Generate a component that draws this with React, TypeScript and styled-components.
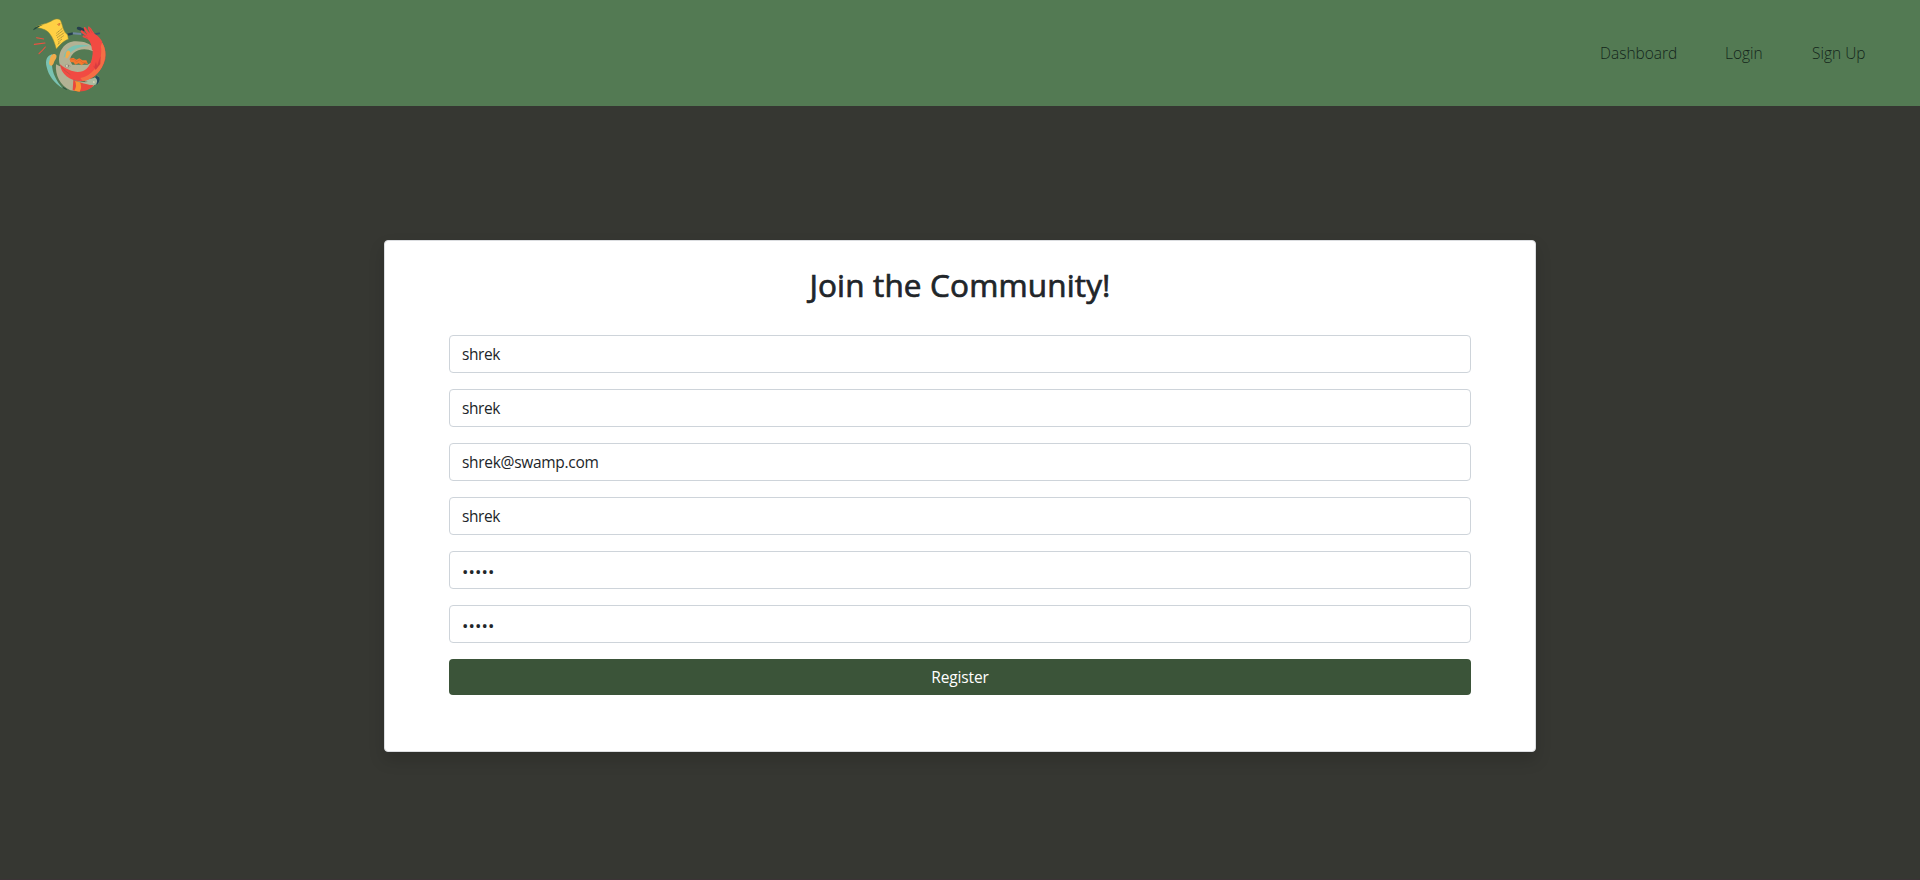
import React from "react";
import styled, { createGlobalStyle } from "styled-components";

const GlobalStyle = createGlobalStyle`
  *, *::before, *::after { box-sizing: border-box; }
  body {
    margin: 0;
    background: #363732;
    color: #212529;
    font-family: "Segoe UI", "Open Sans", "Noto Sans", sans-serif;
    font-size: 16px;
    line-height: 24px;
  }
`;

const Page = styled.div`
  height: 880px;
  display: flex;
  flex-direction: column;
  overflow: hidden;
  border-bottom: 1px solid #3b3336;
`;

const Navbar = styled.header`
  flex: none;
  height: 106px;
  padding: 0 52px 0 30px;
  display: flex;
  align-items: center;
  justify-content: space-between;
  background: #537a53;
`;

const Logo = styled.svg`
  width: 80px;
  height: 80px;
`;

const Nav = styled.nav`
  display: flex;
  gap: 48px;
`;

const NavLink = styled.a<{ $width: number }>`
  width: ${(p) => p.$width}px;
  font-size: 15.5px;
  font-weight: 300;
  white-space: nowrap;
  color: #14261b;
  text-decoration: none;
`;

const Main = styled.main`
  display: flex;
  justify-content: center;
  padding-top: 134px;
`;

const Card = styled.section`
  width: 1152px;
  height: 512px;
  padding: 23px 64px 0;
  background: #fff;
  border: 1px solid #dbdde0;
  border-radius: 4px;
  box-shadow: 0 8px 16px rgba(0, 0, 0, 0.15);
`;

const Title = styled.h1`
  margin: 0 0 29px;
  text-align: center;
  font-size: 31.5px;
  line-height: 42px;
  font-weight: 400;
  letter-spacing: 0.15px;
  -webkit-text-stroke: 0.7px #212529;
`;

const Form = styled.form`
  display: flex;
  flex-direction: column;
  gap: 16px;
`;

const Field = styled.input`
  width: 100%;
  height: 38px;
  padding: 6px 12px;
  border: 1px solid #ced4da;
  border-radius: 4px;
  background: #fff;
  color: #212529;
  font-family: inherit;
  font-size: 15.5px;
  line-height: 24px;
  letter-spacing: -0.4px;
  outline: none;

  &[type="email"] {
    letter-spacing: -0.3px;
  }

  &[type="password"] {
    padding: 7px 12px 5px;
    font-size: 17px;
    letter-spacing: 0.1px;
  }
`;

const SubmitButton = styled.button`
  height: 36px;
  border: 0;
  border-radius: 4px;
  background: #3b5439;
  color: #fff;
  font-family: inherit;
  font-size: 15.5px;
  line-height: 24px;
  letter-spacing: -0.15px;
`;

const LINKS = [
  { label: "Dashboard", width: 77 },
  { label: "Login", width: 39 },
  { label: "Sign Up", width: 56 },
];

const FIELDS = [
  { name: "firstName", type: "text", value: "shrek" },
  { name: "lastName", type: "text", value: "shrek" },
  { name: "email", type: "email", value: "shrek@swamp.com" },
  { name: "username", type: "text", value: "shrek" },
  { name: "password", type: "password", value: "shrek" },
  { name: "confirm", type: "password", value: "shrek" },
];

function HandsLogo() {
  return (
    <Logo viewBox="30 9 240 240" fill="none" aria-hidden="true">
      <path d="M96 133 C80 137 75 153 80 171 C85 196 103 220 128 235 C108 211 97 188 96 165 Z" fill="#79c2b2" />
      <path d="M90 145 C92 132 104 128 109 136 C112 144 103 151 101 160 C97 171 88 168 87 159 Z" fill="#f0ac4c" />
      <path d="M108 163 C105 196 120 226 151 241 C175 247 202 241 222 227 L218 214 C192 222 150 211 124 171 Z" fill="#b3b294" />
      <path d="M160 210 C180 219 204 224 222 226 C209 242 181 250 158 240 Z" fill="#e9483c" />
      <path d="M165 212 L180 217 Q187 230 179 245 L163 242 Q172 228 165 212Z" fill="#f79433" />
      <path d="M196 204 C210 209 225 204 232 197 C241 201 241 213 234 221 L221 226 C207 225 196 218 193 210 Z" fill="#aaba9f" />
      <path d="M229 197 C242 199 242 211 234 221 L227 225 C233 216 233 206 225 203Z" fill="#254b5b" />
      <path d="M219 213 l7 3 -6 4z" fill="#ded9bd" />
      <path fillRule="evenodd" d="M119 163 C111 126 133 94 168 94 C195 94 212 103 219 113 L222 181 C205 212 164 220 139 199 C129 191 122 180 119 163Z M219 124 C199 113 173 117 161 129 C147 143 149 152 157 164 L203 164 L213 158 C218 148 220 136 219 124Z" fill="#b3b294" />
      <path d="M131 142 C136 110 170 98 210 108 C178 108 157 119 145 136 Z" fill="#79c2b2" />
      <path d="M137 135 C137 123 145 118 150 125 C154 131 146 135 145 141 C141 149 134 144 137 135Z" fill="#f0ac4c" />
      <path d="M148 146 L160 143 L169 149 L178 145 L187 151 L199 151 L204 163 L193 160 L185 166 L176 160 L166 164 L160 157 L152 157Z" fill="#f3792d" />
      <path d="M151 147 L163 149 L170 155 L179 150 L188 158 L200 158" stroke="#d65b2d" strokeWidth="1.5" />
      <path d="M215 96 C222 128 218 160 199 177 C180 193 148 186 120 163 C123 193 151 215 186 213 C220 211 247 181 256 147 C260 117 249 94 231 82 Z" fill="#f24a42" />
      <path d="M231 82 C260 104 263 140 245 173 C231 196 210 211 188 213 L181 204 C213 199 239 166 243 134 C246 112 241 97 229 88Z" fill="#f56e45" />
      <path d="M219 164 l3 9 6 -18 3 12 11 -30 -1 25 -14 18z" fill="#d83b40" />
      <path d="M145 72 L173 70 L213 76" stroke="#3a586b" strokeWidth="3" />
      <path d="M158 70 L184 72" stroke="#6d879e" strokeWidth="6" />
      <path d="M222 73 L238 70" stroke="#36576b" strokeWidth="5" strokeLinecap="round" />
      <path d="M141 71 L158 67 L158 74 L144 77Z" fill="#263f4d" />
      <path d="M171 58 C168 48 178 49 185 53 L196 58 L190 66Z" fill="#263f4d" />
      <path d="M188 81 C187 75 193 76 199 78 C185 71 178 63 184 61 C189 60 199 74 202 72 C191 59 189 51 194 51 C199 52 207 70 209 67 C203 55 202 48 208 50 C213 52 219 66 226 73 C235 79 243 87 247 96 L236 125 L216 120 C214 98 207 89 197 85Z" fill="#f24a42" />
      <path d="M190 77 L204 85 M187 63 L202 76 M196 54 L210 70 M206 51 L217 69" stroke="#bd3f43" strokeWidth="1.2" />
      <path d="M47 52 C62 43 84 41 98 31 C108 25 116 26 121 30 C129 46 127 61 143 75 L145 88 C132 92 123 101 109 117 C104 99 99 82 87 68 C78 58 60 54 47 52Z" fill="#ffd044" stroke="#8d8c35" strokeWidth="1.5" />
      <path d="M39 61 C42 51 57 47 68 45 C56 50 50 55 46 58Z" fill="#254c3e" />
      <path d="M109 70 L128 54 M109 77 L130 61 M111 83 L133 68 M113 90 L131 77 M114 97 L126 87 M113 103 L121 97" stroke="#7b6d32" strokeWidth="1.8" strokeDasharray="5 1" />
      <path d="M113 43 l7 -3 -2 6 -4 -1z" stroke="#dd7c36" strokeWidth="3" />
      <path d="M50 83 L71 87 M43 103 L75 99 M57 131 Q67 122 76 111" stroke="#ef5140" strokeWidth="3.3" strokeLinecap="round" />
      <path d="M136 165 Q143 159 151 169 Q145 177 137 171Z" fill="#dad6bd" stroke="#7e7665" strokeWidth="1.5" />
      <circle cx="145" cy="168" r="2.5" fill="#625b50" />
      <path d="M119 163 Q129 181 151 194 M160 210 Q181 219 202 214" stroke="#8b5c48" strokeWidth="1.3" />
      <path d="M130 233 L139 238" stroke="#274c3d" strokeWidth="3" strokeLinecap="round" />
    </Logo>
  );
}

export default function App() {
  return (
    <>
      <GlobalStyle />
      <Page>
        <Navbar>
          <HandsLogo />
          <Nav>
            {LINKS.map((link) => (
              <NavLink key={link.label} $width={link.width}>{link.label}</NavLink>
            ))}
          </Nav>
        </Navbar>
        <Main>
          <Card>
            <Title>Join the Community!</Title>
            <Form>
              {FIELDS.map((field) => (
                <Field key={field.name} name={field.name} type={field.type} defaultValue={field.value} />
              ))}
              <SubmitButton type="button">Register</SubmitButton>
            </Form>
          </Card>
        </Main>
      </Page>
    </>
  );
}
